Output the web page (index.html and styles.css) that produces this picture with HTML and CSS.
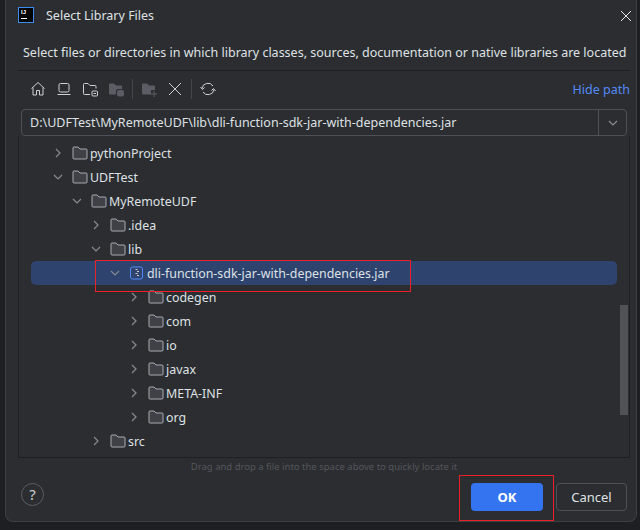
FILE: index.html
```html
<!DOCTYPE html>
<html lang="en">

<head>
  <meta charset="UTF-8">
  <meta name="viewport" content="width=device-width, initial-scale=1.0">
  <title>Select Library Files</title>
  <link rel="stylesheet" href="styles.css">
</head>

<body>
  <div class="dialog">
    <header class="titlebar">
      <div class="app-logo"><span class="logo-ij">IJ</span><span class="logo-bar"></span></div>
      <span class="title">Select Library Files</span>
      <svg class="close" width="12" height="12" viewBox="0 0 12 12"><path d="M1 1L11 11M11 1L1 11" /></svg>
    </header>

    <p class="description">Select files or directories in which library classes, sources, documentation or native libraries are located</p>

    <div class="toolbar">
      <div class="tools">
        <svg class="tool" width="16" height="16" viewBox="0 0 16 16"><path d="M1.5 7.5L8 1.5L14.5 7.5M3 6.5V14H6.5V9.5H9.5V14H13V6.5" /></svg>
        <svg class="tool" width="16" height="16" viewBox="0 0 16 16"><rect x="3" y="2.5" width="10" height="8.5" rx="1.5" /><path d="M1.5 13.5H14.5" /></svg>
        <svg class="tool" width="16" height="16" viewBox="0 0 16 16"><path d="M8 13.5H2.5A1 1 0 0 1 1.5 12.5V3.5A1 1 0 0 1 2.5 2.5H6L8 4.5H13A1 1 0 0 1 14 5.5V7.5" /><rect x="10" y="10" width="5.5" height="5" rx="1" /><path d="M11.5 12.5H14" /></svg>
        <svg class="tool-off" width="16" height="16" viewBox="0 0 16 16"><path d="M1 3.5A1 1 0 0 1 2 2.5H6L8 4.5H13A1 1 0 0 1 14 5.5V8H10A2 2 0 0 0 8 10V13.5H2A1 1 0 0 1 1 12.5Z" /><rect x="9" y="9" width="7" height="6.5" rx="2" /></svg>
        <span class="tool-sep"></span>
        <svg class="tool-off" width="16" height="16" viewBox="0 0 16 16"><path d="M1 3.5A1 1 0 0 1 2 2.5H6L8 4.5H13A1 1 0 0 1 14 5.5V9H10V13.5H2A1 1 0 0 1 1 12.5Z" /><path class="plus" d="M13 10V16M10 13H16" /></svg>
        <svg class="tool" width="16" height="16" viewBox="0 0 16 16"><path d="M2 2L14 14M14 2L2 14" /></svg>
        <span class="tool-sep"></span>
        <svg class="tool" width="16" height="16" viewBox="0 0 16 16"><path d="M2 7.5A6 6 0 0 1 13 5M14 8.5A6 6 0 0 1 3 11M0.5 6L2.5 8.5L4.5 6.5M15.5 10L13.5 7.5L11.5 9.5" /></svg>
      </div>
      <a href="#" class="hide-path">Hide path</a>
    </div>

    <div class="path-field">
      <span class="path-text">D:\UDFTest\MyRemoteUDF\lib\dli-function-sdk-jar-with-dependencies.jar</span>
      <span class="path-arrow"><svg class="chev" width="10" height="6" viewBox="0 0 10 6"><path d="M1 1L5 5L9 1" /></svg></span>
    </div>

    <div class="tree">
      <div class="row depth-0"><svg class="chev" width="14" height="14" viewBox="0 0 14 14"><path d="M5 3L9 7L5 11" /></svg><svg class="folder" width="16" height="14" viewBox="0 0 16 14"><path d="M1 2A1 1 0 0 1 2 1H6L8 3H14A1 1 0 0 1 15 4V12A1 1 0 0 1 14 13H2A1 1 0 0 1 1 12Z" /></svg><span>pythonProject</span></div>
      <div class="row depth-0"><svg class="chev" width="14" height="14" viewBox="0 0 14 14"><path d="M3 5L7 9L11 5" /></svg><svg class="folder" width="16" height="14" viewBox="0 0 16 14"><path d="M1 2A1 1 0 0 1 2 1H6L8 3H14A1 1 0 0 1 15 4V12A1 1 0 0 1 14 13H2A1 1 0 0 1 1 12Z" /></svg><span>UDFTest</span></div>
      <div class="row depth-1"><svg class="chev" width="14" height="14" viewBox="0 0 14 14"><path d="M3 5L7 9L11 5" /></svg><svg class="folder" width="16" height="14" viewBox="0 0 16 14"><path d="M1 2A1 1 0 0 1 2 1H6L8 3H14A1 1 0 0 1 15 4V12A1 1 0 0 1 14 13H2A1 1 0 0 1 1 12Z" /></svg><span>MyRemoteUDF</span></div>
      <div class="row depth-2"><svg class="chev" width="14" height="14" viewBox="0 0 14 14"><path d="M5 3L9 7L5 11" /></svg><svg class="folder" width="16" height="14" viewBox="0 0 16 14"><path d="M1 2A1 1 0 0 1 2 1H6L8 3H14A1 1 0 0 1 15 4V12A1 1 0 0 1 14 13H2A1 1 0 0 1 1 12Z" /></svg><span>.idea</span></div>
      <div class="row depth-2"><svg class="chev" width="14" height="14" viewBox="0 0 14 14"><path d="M3 5L7 9L11 5" /></svg><svg class="folder" width="16" height="14" viewBox="0 0 16 14"><path d="M1 2A1 1 0 0 1 2 1H6L8 3H14A1 1 0 0 1 15 4V12A1 1 0 0 1 14 13H2A1 1 0 0 1 1 12Z" /></svg><span>lib</span></div>
      <div class="row depth-3 selected"><svg class="chev" width="14" height="14" viewBox="0 0 14 14"><path d="M3 5L7 9L11 5" /></svg><svg class="jar" width="16" height="14" viewBox="0 0 16 14"><rect x="1.5" y="1" width="12" height="12" rx="2" /><path class="jar-dots" d="M6.5 3.5H8.5M8 5.5H10M6.5 7.5H8.5M8 9.5H10" /></svg><span>dli-function-sdk-jar-with-dependencies.jar</span></div>
      <div class="row depth-4"><svg class="chev" width="14" height="14" viewBox="0 0 14 14"><path d="M5 3L9 7L5 11" /></svg><svg class="folder" width="16" height="14" viewBox="0 0 16 14"><path d="M1 2A1 1 0 0 1 2 1H6L8 3H14A1 1 0 0 1 15 4V12A1 1 0 0 1 14 13H2A1 1 0 0 1 1 12Z" /></svg><span>codegen</span></div>
      <div class="row depth-4"><svg class="chev" width="14" height="14" viewBox="0 0 14 14"><path d="M5 3L9 7L5 11" /></svg><svg class="folder" width="16" height="14" viewBox="0 0 16 14"><path d="M1 2A1 1 0 0 1 2 1H6L8 3H14A1 1 0 0 1 15 4V12A1 1 0 0 1 14 13H2A1 1 0 0 1 1 12Z" /></svg><span>com</span></div>
      <div class="row depth-4"><svg class="chev" width="14" height="14" viewBox="0 0 14 14"><path d="M5 3L9 7L5 11" /></svg><svg class="folder" width="16" height="14" viewBox="0 0 16 14"><path d="M1 2A1 1 0 0 1 2 1H6L8 3H14A1 1 0 0 1 15 4V12A1 1 0 0 1 14 13H2A1 1 0 0 1 1 12Z" /></svg><span>io</span></div>
      <div class="row depth-4"><svg class="chev" width="14" height="14" viewBox="0 0 14 14"><path d="M5 3L9 7L5 11" /></svg><svg class="folder" width="16" height="14" viewBox="0 0 16 14"><path d="M1 2A1 1 0 0 1 2 1H6L8 3H14A1 1 0 0 1 15 4V12A1 1 0 0 1 14 13H2A1 1 0 0 1 1 12Z" /></svg><span>javax</span></div>
      <div class="row depth-4"><svg class="chev" width="14" height="14" viewBox="0 0 14 14"><path d="M5 3L9 7L5 11" /></svg><svg class="folder" width="16" height="14" viewBox="0 0 16 14"><path d="M1 2A1 1 0 0 1 2 1H6L8 3H14A1 1 0 0 1 15 4V12A1 1 0 0 1 14 13H2A1 1 0 0 1 1 12Z" /></svg><span>META-INF</span></div>
      <div class="row depth-4"><svg class="chev" width="14" height="14" viewBox="0 0 14 14"><path d="M5 3L9 7L5 11" /></svg><svg class="folder" width="16" height="14" viewBox="0 0 16 14"><path d="M1 2A1 1 0 0 1 2 1H6L8 3H14A1 1 0 0 1 15 4V12A1 1 0 0 1 14 13H2A1 1 0 0 1 1 12Z" /></svg><span>org</span></div>
      <div class="row depth-2"><svg class="chev" width="14" height="14" viewBox="0 0 14 14"><path d="M5 3L9 7L5 11" /></svg><svg class="folder" width="16" height="14" viewBox="0 0 16 14"><path d="M1 2A1 1 0 0 1 2 1H6L8 3H14A1 1 0 0 1 15 4V12A1 1 0 0 1 14 13H2A1 1 0 0 1 1 12Z" /></svg><span>src</span></div>
      <div class="scrollbar"></div>
    </div>

    <p class="hint">Drag and drop a file into the space above to quickly locate it</p>

    <footer class="actions">
      <span class="help">?</span>
      <button class="btn btn-ok">OK</button>
      <button class="btn btn-cancel">Cancel</button>
    </footer>
  </div>

  <!-- annotations drawn over the screenshot -->
  <div class="mark mark-jar"></div>
  <div class="mark mark-ok"></div>
</body>

</html>
```

FILE: styles.css
```css
:root {
  --bg: #2b2d30;
  --outside: #1e1f22;
  --line: #1e1f22;
  --border: #4e5157;
  --text: #dfe1e5;
  --blue: #3574f0;
}

body {
  margin: 0;
  width: 640px;
  height: 530px;
  overflow: hidden;
  position: relative;
  background: var(--outside);
  font-family: "Noto Sans", sans-serif;
  font-size: 12.5px;
  color: var(--text);
}

.dialog {
  width: 632px;
  height: 522px;
  margin-left: 5px;
  box-sizing: border-box;
  padding: 0 6px 0 12px;
  display: flex;
  flex-direction: column;
  background: var(--bg);
  border: 1px solid #3d3f43;
  border-top: none;
  border-radius: 0 0 8px 8px;
}

.titlebar {
  height: 32px;
  display: flex;
  align-items: center;
  flex-shrink: 0;
}

.app-logo {
  width: 16px;
  height: 16px;
  box-sizing: border-box;
  border: 1px solid #3b8cf0;
  background: #000;
  display: flex;
  flex-direction: column;
  padding: 1px 2px;
  margin-top: -2px;
}

.logo-ij {
  font-family: "Liberation Sans", sans-serif;
  font-size: 6px;
  font-weight: 700;
  line-height: 7px;
  color: #fff;
}

.logo-bar {
  width: 6px;
  height: 1px;
  margin-top: 2px;
  background: #fff;
}

.title {
  margin-left: 12px;
  flex: 1;
  margin-top: -1px;
}

.close {
  margin-right: -2px;
  fill: none;
  stroke: #e4e6ea;
  stroke-width: 1;
}

.description {
  margin: 0;
  height: 39px;
  box-sizing: border-box;
  padding: 11px 0 0 5px;
  line-height: 20px;
  border-bottom: 1px solid var(--line);
  white-space: nowrap;
  flex-shrink: 0;
}

.toolbar {
  height: 38px;
  box-sizing: border-box;
  padding-bottom: 2px;
  display: flex;
  align-items: center;
  justify-content: space-between;
  flex-shrink: 0;
}

.tools {
  display: flex;
  align-items: center;
  padding-left: 12px;
  gap: 10px;
}

.tool, .tool-off {
  fill: none;
  stroke: #ced0d6;
  stroke-width: 1;
}

.tool-off {
  fill: #5a5d63;
  stroke: none;
}

.plus {
  fill: none;
  stroke: #5a5d63;
}

.tool-sep {
  width: 1px;
  height: 20px;
  margin: 0 -2px;
  background: #43454a;
}

.hide-path {
  color: #548af7;
  text-decoration: none;
}

.path-field {
  height: 27px;
  margin: 0 3px;
  display: flex;
  align-items: center;
  box-sizing: border-box;
  border: 1px solid var(--border);
  border-radius: 4px;
  flex-shrink: 0;
}

.path-text {
  flex: 1;
  padding-left: 8px;
}

.path-arrow {
  width: 27px;
  height: 100%;
  display: flex;
  align-items: center;
  justify-content: center;
  border-left: 1px solid var(--border);
}

.chev {
  fill: none;
  stroke: #868a91;
  stroke-width: 1.2;
  flex-shrink: 0;
}

.tree {
  position: relative;
  height: 322px;
  box-sizing: border-box;
  padding-top: 5px;
  border: 1px solid var(--line);
  border-top: none;
  flex-shrink: 0;
  overflow: hidden;
}

.row {
  height: 24px;
  display: flex;
  align-items: center;
  white-space: nowrap;
  font-size: 12.4px;
}

.row span {
  margin-left: 2px;
}

.depth-0 { padding-left: 32px; }
.depth-1 { padding-left: 51px; }
.depth-2 { padding-left: 70px; }
.depth-3 { padding-left: 89px; }
.depth-4 { padding-left: 108px; }

.selected {
  background: #2e436e;
  border-radius: 5px;
  margin: 0 12px;
  padding-left: 77px;
}

.chev + svg {
  margin-left: 7px;
  flex-shrink: 0;
}

.folder {
  fill: #3f4146;
  stroke: #a8abb2;
  stroke-width: 1;
}

.jar {
  fill: #2e436e;
  stroke: #548af7;
  stroke-width: 1;
}

.jar-dots {
  fill: none;
  stroke: #ced0d6;
}

.scrollbar {
  position: absolute;
  right: 1px;
  top: 169px;
  width: 8px;
  height: 110px;
  background: #505256;
}

.hint {
  margin: 1px 0 0;
  height: 15px;
  text-align: center;
  font-size: 9.5px;
  line-height: 16px;
  color: #54575d;
  flex-shrink: 0;
}

.actions {
  flex: 1;
  display: flex;
  align-items: flex-start;
  padding: 9px 3px 0;
  gap: 13px;
}

.help {
  width: 23px;
  height: 23px;
  margin-right: auto;
  box-sizing: border-box;
  border: 1px solid #5a5d63;
  border-radius: 50%;
  text-align: center;
  font-size: 15px;
  line-height: 21px;
  color: #ced0d6;
}

.btn {
  height: 28px;
  box-sizing: border-box;
  font-family: inherit;
  font-size: 13px;
  color: var(--text);
  border-radius: 4px;
  padding: 0;
}

.btn-ok {
  width: 72px;
  background: var(--blue);
  border: none;
  color: #fff;
  font-weight: 700;
}

.btn-cancel {
  width: 71px;
  background: transparent;
  border: 1px solid var(--border);
}

.mark {
  position: absolute;
  z-index: 5;
  border: 1px solid #e8212b;
  box-sizing: border-box;
}

.mark-jar {
  left: 95px;
  top: 260px;
  width: 316px;
  height: 32px;
}

.mark-ok {
  left: 459px;
  top: 475px;
  width: 95px;
  height: 46px;
}
```
